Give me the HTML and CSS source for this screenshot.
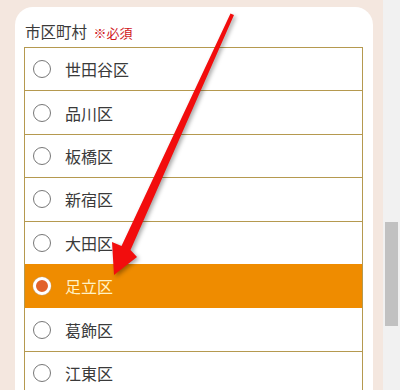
FILE: index.html
```html
<!DOCTYPE html>
<html lang="ja">
<head>
<meta charset="utf-8">
<link rel="stylesheet" href="styles.css">
</head>
<body>
<div class="screen">
  <main class="page">
    <section class="card">
      <div class="label">市区町村 <span class="req">※必須</span></div>
      <div class="list">
        <div class="row"><span class="radio"></span><span class="name">世田谷区</span></div>
        <div class="row"><span class="radio"></span><span class="name">品川区</span></div>
        <div class="row"><span class="radio"></span><span class="name">板橋区</span></div>
        <div class="row"><span class="radio"></span><span class="name">新宿区</span></div>
        <div class="row"><span class="radio"></span><span class="name">大田区</span></div>
        <div class="row selected"><span class="radio"></span><span class="name">足立区</span></div>
        <div class="row"><span class="radio"></span><span class="name">葛飾区</span></div>
        <div class="row"><span class="radio"></span><span class="name">江東区</span></div>
      </div>
    </section>
  </main>
  <div class="scrollbar"><div class="thumb"></div></div>
  <svg class="arrow" width="400" height="390" viewBox="0 0 400 390">
    <polygon points="234,15 130.5,250 137,257 114,275 112,242 121.5,246 230.5,13.5" fill="#f20d0d"/>
  </svg>
</div>
</body>
</html>
```
FILE: styles.css
```css
html, body {
  margin: 0;
  padding: 0;
  height: 390px;
  overflow: hidden;
}
body {
  font-family: "Noto Sans CJK JP", "Noto Sans", sans-serif;
  color: #3a3a3a;
}
.screen {
  position: relative;
  display: flex;
  width: 400px;
  height: 390px;
  overflow: hidden;
}
.page {
  width: 383px;
  background: #f4e7df;
  padding: 7px 10px 0 15px;
  box-sizing: border-box;
}
.card {
  background: #fff;
  border-radius: 18px 18px 0 0;
  padding: 12px 10px 0 9px;
  height: 420px;
  box-sizing: border-box;
}
.label {
  font-size: 15.5px;
  line-height: 24px;
  padding-left: 1px;
  height: 28px;
}
.req {
  color: #d0161b;
  font-size: 13px;
  margin-left: 3px;
}
.list {
  border: 1px solid #b5994f;
  border-top: none;
}
.row {
  display: flex;
  align-items: center;
  height: 43.4px;
  box-sizing: border-box;
  border-top: 1px solid #b5994f;
  padding-left: 8px;
  font-size: 16px;
}
.radio {
  width: 18px;
  height: 18px;
  box-sizing: border-box;
  border: 1px solid #777;
  border-radius: 50%;
  background: #fff;
  margin-right: 14px;
  flex: none;
}
.selected {
  background: #ef8c00;
  border-top-color: #ef8c00;
  color: #fff2c6;
}
.selected + .row {
  border-top-color: #ef8c00;
}
.selected .radio {
  border: 3.5px solid #fff;
  background: #e2622a;
  box-shadow: 0 0 0 0.5px #c9a070;
}
.scrollbar {
  width: 17px;
  background: #f1f1f1;
  padding-top: 222px;
  box-sizing: border-box;
}
.thumb {
  margin-left: 2px;
  width: 13px;
  height: 104px;
  background: #c1c1c1;
}
.arrow {
  position: absolute;
  left: 0;
  top: 0;
  pointer-events: none;
  filter: drop-shadow(2px 2px 2px rgba(0,0,0,0.35));
}
```
